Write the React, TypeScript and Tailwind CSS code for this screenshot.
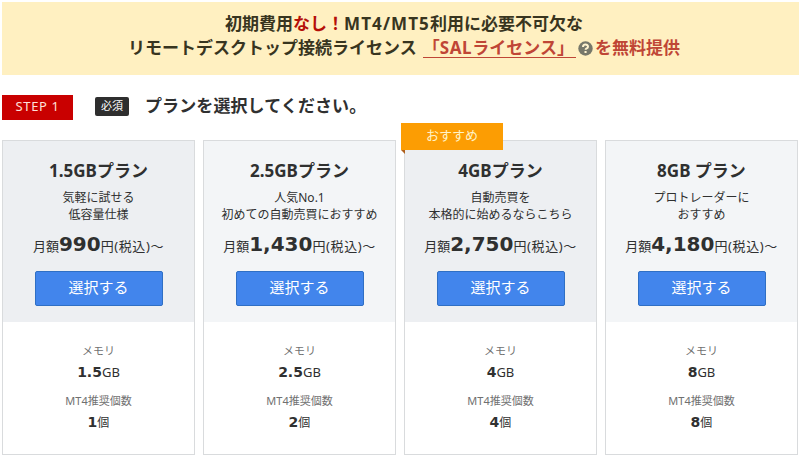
import React from "react";

type Plan = {
  name: string;
  lines: [string, string];
  price: string;
  memory: string;
  count: string;
  head: string;
  recommended?: boolean;
};

const plans: Plan[] = [
  { name: "1.5GBプラン", lines: ["気軽に試せる", "低容量仕様"], price: "990", memory: "1.5", count: "1", head: "bg-[#edeff2]" },
  { name: "2.5GBプラン", lines: ["人気No.1", "初めての自動売買におすすめ"], price: "1,430", memory: "2.5", count: "2", head: "bg-[#f3f5f7]" },
  { name: "4GBプラン", lines: ["自動売買を", "本格的に始めるならこちら"], price: "2,750", memory: "4", count: "4", head: "bg-[#edeff2]", recommended: true },
  { name: "8GB プラン", lines: ["プロトレーダーに", "おすすめ"], price: "4,180", memory: "8", count: "8", head: "bg-[#f3f5f7]" },
];

function Num({ children, className }: { children: React.ReactNode; className: string }) {
  return <span className={`font-['DejaVu_Sans',sans-serif] font-bold ${className}`}>{children}</span>;
}

function PlanCard({ plan }: { plan: Plan }) {
  return (
    <section className="relative flex h-[315px] w-[193px] flex-col border border-[#d9dbdd] bg-white text-center whitespace-nowrap">
      {plan.recommended && (
        <div className="absolute -top-[18px] -left-[4px]">
          <div className="h-[27px] w-[102px] bg-[#fc9d03] text-[13px] leading-[25px] text-[#fff3c8]">おすすめ</div>
          <div className="h-[4px] w-[4px] bg-[#b0601c] [clip-path:polygon(0_0,100%_0,100%_100%)]" />
        </div>
      )}
      <div className={`flex h-[181px] flex-col items-center pt-[18px] ${plan.head}`}>
        <h3 className="text-[17px] leading-[24px] font-bold">{plan.name}</h3>
        <p className="mt-[6px] text-[12px] leading-[17px]">
          {plan.lines[0]}
          <br />
          {plan.lines[1]}
        </p>
        <p className="mt-[7px] flex h-[28px] items-baseline text-[13px] leading-[28px]">
          月額<Num className="text-[20px]">{plan.price}</Num>
          <span className="tracking-[0.6px]">円(税込)～</span>
        </p>
        <button className="mt-[13px] h-[35px] w-[128px] rounded-[2px] border border-[#2f6fc4] bg-[#4285ec] pb-[3px] text-[15px] leading-[30px] text-white">
          選択する
        </button>
      </div>
      <dl className="flex flex-col pt-[20px]">
        <dt className="text-[11px] leading-[18px] text-[#707070]">メモリ</dt>
        <dd className="text-[13px] leading-[24px]">
          <Num className="text-[14px]">{plan.memory}</Num>GB
        </dd>
        <dt className="mt-[8px] text-[11px] leading-[18px] text-[#707070]">MT4推奨個数</dt>
        <dd className="text-[12px] leading-[24px]">
          <Num className="text-[14px]">{plan.count}</Num>個
        </dd>
      </dl>
    </section>
  );
}

export default function App() {
  return (
    <main className="h-[457px] w-[799px] overflow-hidden bg-white pt-[2px] pl-[2px] font-['Noto_Sans','Noto_Sans_CJK_JP',sans-serif] text-[#2f3030]">
      <header className="h-[73px] bg-[#fff0c1] pt-[10px] pl-[7px] text-center text-[17px] leading-[24px] font-bold whitespace-nowrap text-[#38351f]">
        <p>
          初期費用<span className="text-[#b50f08]">なし！</span>
          <span className="tracking-[1.1px]">MT4/MT5</span>利用に必要不可欠な
        </p>
        <p className="flex items-center justify-center text-[#bf4636]">
          <span className="text-[#38351f]">リモートデスクトップ接続ライセンス</span>
          <a className="ml-[6px] border-b border-[#bf4636] pr-[2px] leading-[18px]">
            「<span className="tracking-[0.6px]">SAL</span>ライセンス」
          </a>
          <svg className="mx-[2px]" width="15" height="15" viewBox="0 0 15 15">
            <circle cx="7.5" cy="7.5" r="7.2" fill="#77786a" />
            <path d="M5 6c0-3.2 5-3.1 5-.3 0 1.8-2.4 1.6-2.4 3" fill="none" stroke="#fff3cf" strokeWidth="2" />
            <rect x="6.5" y="10" width="2.1" height="2" fill="#fff3cf" />
          </svg>
          <span>を無料提供</span>
        </p>
      </header>
      <div className="mt-[20px] flex h-[25px] items-start whitespace-nowrap">
        <span className="h-[25px] w-[71px] bg-[#c90000] text-center text-[13px] leading-[23px] tracking-[0.6px] text-[#ffe0dc]">STEP 1</span>
        <span className="mt-[2px] ml-[22px] h-[19px] w-[34px] rounded-[2px] bg-[#2e2e2e] text-center text-[11px] leading-[18px] text-white">必須</span>
        <h2 className="ml-[16px] text-[17px] leading-[21px] font-bold tracking-[0.1px]">プランを選択してください。</h2>
      </div>
      <div className="mt-[20px] flex gap-[8px]">
        {plans.map((plan) => (
          <PlanCard key={plan.name} plan={plan} />
        ))}
      </div>
    </main>
  );
}
